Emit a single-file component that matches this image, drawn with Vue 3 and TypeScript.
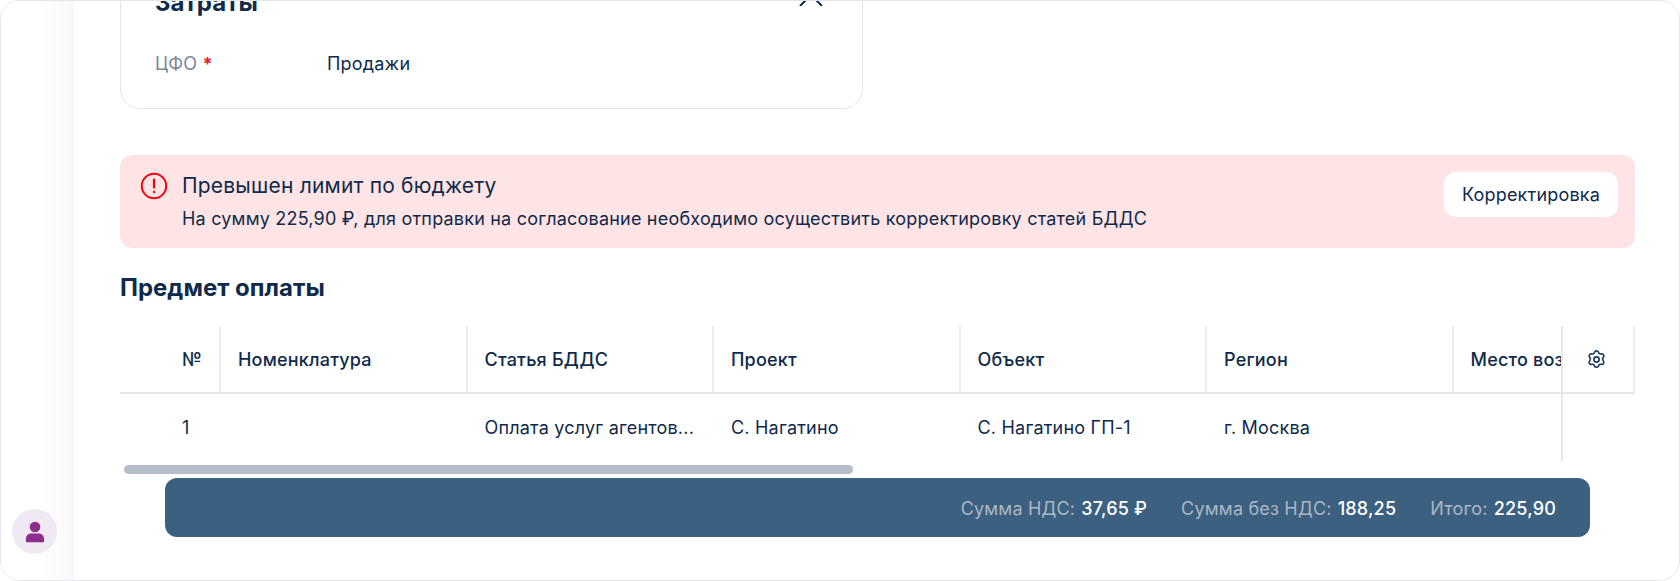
<template>
  <div class="frame">
    <aside class="sidebar">
      <div class="avatar">
        <svg width="20" height="22" viewBox="0 0 20 22" fill="#8a2f8e">
          <circle cx="10" cy="6" r="5.3" />
          <path d="M1 20.5v-3C1 14.4 3.6 12.5 7 12.5h6c3.4 0 6 1.9 6 5v3c0 .5-.4.8-.8.8H1.8c-.4 0-.8-.3-.8-.8z" />
        </svg>
      </div>
    </aside>

    <main class="content">
      <section class="card">
        <div class="card-head">
          <h3>Затраты</h3>
          <svg class="chevron" width="24" height="12" viewBox="0 0 24 12" fill="none" stroke="#0f2a4a" stroke-width="2">
            <path d="M1 12 12 1 23 12" />
          </svg>
        </div>
        <div class="field">
          <span class="field-label">ЦФО <i>*</i></span>
          <span class="field-value">Продажи</span>
        </div>
      </section>

      <section class="alert">
        <svg class="alert-icon" width="28" height="28" viewBox="0 0 28 28" fill="none" stroke="#f8000c">
          <circle cx="14" cy="14" r="12.2" stroke-width="2" />
          <path d="M14 7.5v8" stroke-width="2.2" stroke-linecap="round" />
          <circle cx="14" cy="20" r="1.2" fill="#f8000c" stroke="none" />
        </svg>
        <div class="alert-text">
          <div class="alert-title">Превышен лимит по бюджету</div>
          <div class="alert-desc">На сумму 225,90 ₽, для отправки на согласование необходимо осуществить корректировку статей БДДС</div>
        </div>
        <button type="button" class="alert-btn">Корректировка</button>
      </section>

      <h2 class="section-title">Предмет оплаты</h2>

      <div class="table">
        <div class="table-scroll">
          <div class="tr tr--head">
            <div class="td td--num">№</div>
            <div v-for="col in columns" :key="col" class="td">{{ col }}</div>
          </div>
          <div class="tr tr--body">
            <div class="td td--num">1</div>
            <div v-for="(cell, i) in cells" :key="i" class="td">{{ cell }}</div>
          </div>
        </div>
        <div class="table-side">
          <div class="side-head">
            <svg width="21" height="21" viewBox="0 0 24 24" fill="none" stroke="#1c3a5e" stroke-width="1.9" stroke-linejoin="round">
              <path d="M12 2.2c1 0 1.8.5 2.2 1.4l.5 1a2 2 0 0 0 2 1.1l1.1-.1c1-.1 1.9.4 2.3 1.2.5.9.4 1.9-.2 2.7l-.6.9a2 2 0 0 0 0 2.3l.6.9c.6.8.7 1.8.2 2.7-.4.8-1.3 1.3-2.3 1.2l-1.1-.1a2 2 0 0 0-2 1.1l-.5 1c-.4.9-1.2 1.4-2.2 1.4s-1.8-.5-2.2-1.4l-.5-1a2 2 0 0 0-2-1.1l-1.1.1c-1 .1-1.9-.4-2.3-1.2-.5-.9-.4-1.9.2-2.7l.6-.9a2 2 0 0 0 0-2.3l-.6-.9c-.6-.8-.7-1.8-.2-2.7.4-.8 1.3-1.3 2.3-1.2l1.1.1a2 2 0 0 0 2-1.1l.5-1c.4-.9 1.2-1.4 2.2-1.4z" />
              <circle cx="12" cy="12" r="3" />
            </svg>
          </div>
        </div>
      </div>

      <div class="scrollbar"></div>

      <div class="totals">
        <span v-for="item in totals" :key="item.label" class="total">
          <span class="total-label">{{ item.label }}:</span>
          <span class="total-value">{{ item.value }}</span>
        </span>
      </div>
    </main>
  </div>
</template>

<script setup lang="ts">
const columns = ['Номенклатура', 'Статья БДДС', 'Проект', 'Объект', 'Регион', 'Место возникновения']
const cells = ['', 'Оплата услуг агентов...', 'С. Нагатино', 'С. Нагатино ГП-1', 'г. Москва', '']
const totals = [
  { label: 'Сумма НДС', value: '37,65 ₽' },
  { label: 'Сумма без НДС', value: '188,25' },
  { label: 'Итого', value: '225,90' },
]
</script>

<style>
html,
body {
  margin: 0;
  background: #fff;
}
</style>

<style scoped>
.frame {
  box-sizing: border-box;
  display: flex;
  width: 1680px;
  height: 581px;
  overflow: hidden;
  border: 1px solid #e3e7ec;
  border-radius: 20px;
  background: #fff;
  font-family: Inter, "Noto Sans", sans-serif;
  font-size: 18px;
  letter-spacing: 0.2px;
  color: #0f2a4a;
}

.sidebar {
  box-sizing: border-box;
  display: flex;
  flex: 0 0 73px;
  align-items: flex-end;
  padding: 0 0 26px 11px;
  background: linear-gradient(90deg, #fff 0%, #fff 50%, #f8f8fa 100%);
}

.avatar {
  display: flex;
  align-items: center;
  justify-content: center;
  width: 45px;
  height: 45px;
  border-radius: 50%;
  background: #f0e8f3;
}

.content {
  flex: 1;
  min-width: 0;
  padding-left: 46px;
}

.card {
  box-sizing: border-box;
  width: 743px;
  height: 141px;
  margin-top: -33px;
  padding: 15px 34px 0;
  border: 1px solid #e3e5e8;
  border-radius: 20px;
}

.card-head {
  display: flex;
  align-items: flex-end;
  justify-content: space-between;
  height: 36px;
}

.card-head h3 {
  margin: 0 0 1px;
  font-size: 24px;
  line-height: 32px;
  font-weight: 700;
  letter-spacing: 0;
}

.chevron {
  margin: 0 5px 14px 0;
}

.field {
  display: flex;
  margin-top: 33px;
  line-height: 22px;
}

.field-label {
  width: 172px;
  color: #7a8699;
}

.field-label i {
  color: #e0202a;
  font-style: normal;
  font-weight: 700;
}

.alert {
  box-sizing: border-box;
  display: flex;
  align-items: flex-start;
  width: 1515px;
  height: 93px;
  margin-top: 46px;
  padding: 17px 17px 0 20px;
  border-radius: 12px;
  background: #fee4e5;
}

.alert-text {
  flex: 1;
  margin-left: 14px;
}

.alert-title {
  font-size: 21px;
  line-height: 28px;
}

.alert-desc {
  margin-top: 6px;
  line-height: 26px;
}

.alert-btn {
  width: 174px;
  height: 45px;
  border: none;
  border-radius: 12px;
  background: #fff;
  color: #0f2a4a;
  font-family: inherit;
  font-size: 18px;
  letter-spacing: 0.2px;
}

.section-title {
  margin: 25px 0 0;
  font-size: 24px;
  line-height: 30px;
  font-weight: 700;
  letter-spacing: 0;
}

.table {
  display: flex;
  width: 1515px;
  height: 135px;
  margin-top: 23px;
}

.table-scroll {
  flex: 1;
  min-width: 0;
  overflow: hidden;
}

.tr {
  display: flex;
  width: max-content;
}

.tr--head {
  height: 66px;
  font-weight: 500;
}

.tr--head .td {
  border-right: 2px solid #ececee;
}

.tr--body {
  height: 66px;
  border-top: 2px solid #e6e7ea;
}

.td {
  box-sizing: border-box;
  display: flex;
  flex: 0 0 246.5px;
  align-items: center;
  padding-left: 17px;
  white-space: nowrap;
}

.td--num {
  flex: 0 0 101px;
  padding-left: 62px;
}

.table-side {
  flex: 0 0 72px;
  border-left: 2px solid #e6e7ea;
}

.side-head {
  box-sizing: border-box;
  display: flex;
  align-items: center;
  justify-content: center;
  height: 68px;
  padding-right: 3px;
  border-right: 2px solid #ececee;
  border-bottom: 2px solid #e6e7ea;
}

.scrollbar {
  width: 729px;
  height: 9px;
  margin: 4px 0 0 4px;
  border-radius: 5px;
  background: #b6bcc8;
}

.totals {
  box-sizing: border-box;
  display: flex;
  align-items: center;
  justify-content: flex-end;
  gap: 34px;
  width: 1425px;
  height: 59px;
  margin: 4px 0 0 45px;
  padding: 1px 34px 0 0;
  border-radius: 12px;
  background: #3c607f;
}

.total-label {
  margin-right: 6px;
  color: #aab7c4;
}

.total-value {
  color: #fff;
  font-weight: 500;
}
</style>
